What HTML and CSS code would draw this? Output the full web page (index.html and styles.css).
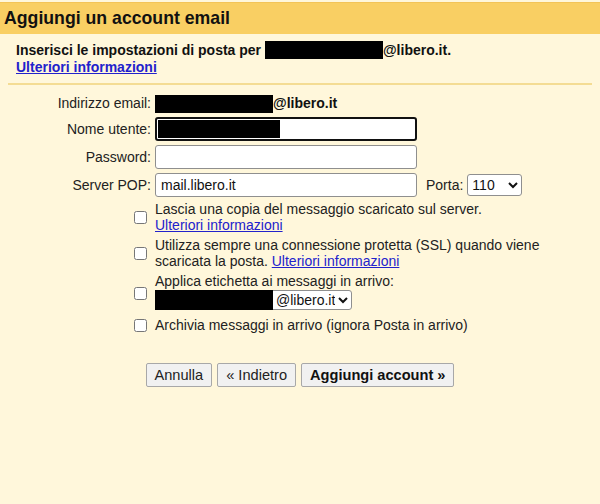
FILE: index.html
```html
<!DOCTYPE html>
<html>
<head>
    <title>Aggiungi un account email</title>
    <meta charset="UTF-8">
    <link rel="stylesheet" href="styles.css">
</head>
<body>
    <div class="header">Aggiungi un account email</div>

    <div class="intro">
        Inserisci le impostazioni di posta per <span class="redact"></span>@libero.it.<br>
        <a href="#" class="link-bold">Ulteriori informazioni</a>
    </div>
    <div class="divider"></div>

    <div class="form">
        <div class="label">Indirizzo email:</div>
        <div class="field email-value"><span class="redact"></span>@libero.it</div>

        <div class="label">Nome utente:</div>
        <div class="field">
            <div class="input-wrap">
                <input type="text" class="text-input focused">
                <span class="redact in-input"></span>
            </div>
        </div>

        <div class="label">Password:</div>
        <div class="field"><input type="password" class="text-input"></div>

        <div class="label">Server POP:</div>
        <div class="field server-row">
            <input type="text" class="text-input" value="mail.libero.it">
            <span class="port-label">Porta:</span>
            <select class="port-select"><option>110</option></select>
        </div>

        <div class="check"><input type="checkbox"></div>
        <div class="option">
            Lascia una copia del messaggio scaricato sul server.<br>
            <a href="#">Ulteriori informazioni</a>
        </div>

        <div class="check"><input type="checkbox"></div>
        <div class="option">
            Utilizza sempre una connessione protetta (SSL) quando viene<br>
            scaricata la posta. <a href="#">Ulteriori informazioni</a>
        </div>

        <div class="check"><input type="checkbox"></div>
        <div class="option">
            Applica etichetta ai messaggi in arrivo:<br>
            <div class="label-select-wrap">
                <select class="label-select"><option>@libero.it</option></select>
                <span class="redact in-select"></span>
            </div>
        </div>

        <div class="check"><input type="checkbox"></div>
        <div class="option">Archivia messaggi in arrivo (ignora Posta in arrivo)</div>
    </div>

    <div class="buttons">
        <button>Annulla</button>
        <button>&laquo; Indietro</button>
        <button class="primary">Aggiungi account &raquo;</button>
    </div>
</body>
</html>
```

FILE: styles.css
```css
body {
    margin: 0;
    background-color: #fff7db;
    font-family: "Liberation Sans", Arial, sans-serif;
    font-size: 14px;
    color: #222;
    min-height: 504px;
}
a {
    color: #2222cc;
}
.header {
    margin-top: 2px;
    height: 31px;
    line-height: 31px;
    padding: 0 4px;
    background-color: #f9cf63;
    border-top: 1px solid #f3c457;
    font-size: 17.7px;
    font-weight: bold;
    color: #111;
}
.intro {
    padding: 7px 16px 0;
    font-weight: bold;
    line-height: 17px;
    color: #111;
}
.link-bold {
    font-weight: bold;
}
.redact {
    display: inline-block;
    width: 118px;
    height: 18px;
    background-color: #000;
    vertical-align: -4px;
}
.divider {
    margin: 7px 8px 0;
    height: 2px;
    background-color: #f4dc93;
}
.form {
    display: grid;
    grid-template-columns: 151px 1fr;
    column-gap: 4px;
    row-gap: 4px;
    margin-top: 8px;
    align-items: center;
}
.label {
    text-align: right;
}
.email-value {
    font-weight: bold;
    color: #111;
    height: 20px;
    line-height: 20px;
}
.email-value .redact {
    vertical-align: -5px;
}
.input-wrap {
    position: relative;
    display: inline-block;
}
.text-input {
    box-sizing: border-box;
    width: 262px;
    height: 24px;
    margin: 0;
    padding: 0 5px;
    border: 1px solid #8f8f8f;
    border-radius: 3px;
    background-color: #fff;
    font-family: "Liberation Sans", Arial, sans-serif;
    font-size: 14px;
    color: #111;
}
.text-input.focused {
    border: 2px solid #111;
}
.redact.in-input {
    position: absolute;
    left: 3px;
    top: 3px;
    width: 122px;
}
.server-row {
    display: flex;
    align-items: center;
}
.port-label {
    margin-left: 9px;
    margin-right: 4px;
}
.port-select {
    width: 55px;
    height: 22px;
    border: 1px solid #8f8f8f;
    border-radius: 3px;
    background-color: #fff;
    font-family: "Liberation Sans", Arial, sans-serif;
    font-size: 14px;
    color: #111;
}
.check {
    justify-self: end;
}
.check input {
    width: 13px;
    height: 13px;
    margin: 0 4px 0 0;
    display: block;
}
.option {
    line-height: 16px;
}
.label-select-wrap {
    position: relative;
    display: inline-block;
    margin-top: 1px;
    margin-bottom: 3px;
}
.label-select {
    width: 197px;
    height: 20px;
    padding-left: 116px;
    border: 1px solid #8f8f8f;
    border-radius: 3px;
    background-color: #fff;
    font-family: "Liberation Sans", Arial, sans-serif;
    font-size: 14px;
    color: #111;
}
.redact.in-select {
    position: absolute;
    left: 0;
    top: 0;
    width: 118px;
    height: 20px;
}
.buttons {
    display: flex;
    justify-content: center;
    gap: 5px;
    margin-top: 30px;
}
.buttons button {
    height: 24px;
    padding: 0 8px;
    background-color: #f1f1f1;
    border: 1px solid #a8a8a8;
    border-radius: 2px;
    font-family: "Liberation Sans", Arial, sans-serif;
    font-size: 14.6px;
    color: #222;
}
.buttons .primary {
    font-weight: bold;
    color: #111;
}
```
